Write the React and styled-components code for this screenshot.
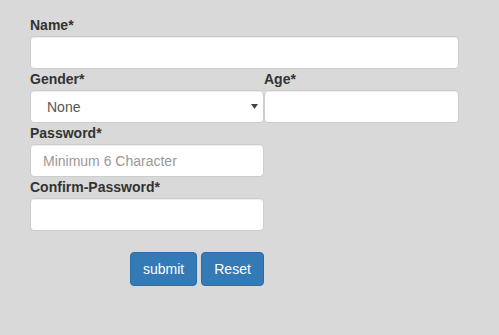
import React, { useState } from 'react';
import styled, { createGlobalStyle } from 'styled-components';

const GlobalStyle = createGlobalStyle`
    html, body {
        margin: 0;
        padding: 0;
        background-color: #d9d9d9;
        font-family: 'Liberation Sans', Arial, sans-serif;
        font-size: 14px;
        color: #333333;
    }
    * {
        box-sizing: border-box;
    }
`

const Page = styled.div`
    min-height: 335px;
    padding: 15px 0 0 30px;
`

const Form = styled.form`
    width: 429px;
    display: grid;
    grid-template-columns: 234px 1fr;
`

const Group = styled.div`
    grid-column: ${props => props.full ? '1 / 3' : 'auto'};
    display: flex;
    flex-direction: column;
    height: 54px;
`

const Label = styled.label`
    display: block;
    font-weight: bold;
    font-size: 14px;
    line-height: 20px;
    height: 21px;
    color: #333333;
`

const Input = styled.input`
    width: 100%;
    height: 33px;
    padding: 6px 12px;
    font-family: 'Liberation Sans', Arial, sans-serif;
    font-size: 14px;
    color: #555555;
    background-color: #ffffff;
    border: 1px solid #cccccc;
    border-radius: 4px;
    box-shadow: inset 0 1px 1px rgba(0, 0, 0, 0.075);
    outline: none;

    &::placeholder {
        color: #999999;
    }
`

const SelectWrap = styled.div`
    position: relative;
    width: 100%;
`

const Select = styled.select`
    width: 100%;
    height: 33px;
    padding: 6px 16px;
    font-family: 'Liberation Sans', Arial, sans-serif;
    font-size: 14px;
    color: #555555;
    background-color: #ffffff;
    border: 1px solid #cccccc;
    border-radius: 4px;
    box-shadow: inset 0 1px 1px rgba(0, 0, 0, 0.075);
    appearance: none;
    outline: none;
`

const Arrow = styled.svg`
    position: absolute;
    right: 6px;
    top: 14px;
    pointer-events: none;
`

const Buttons = styled.div`
    grid-column: 1 / 3;
    display: flex;
    gap: 4px;
    padding: 21px 0 0 100px;
`

const Button = styled.button`
    height: 34px;
    padding: 0 12px;
    font-family: 'Liberation Sans', Arial, sans-serif;
    font-size: 14px;
    color: #ffffff;
    background-color: #337ab7;
    border: 1px solid #2e6da4;
    border-radius: 4px;
    cursor: pointer;

    &:hover {
        background-color: #286090;
    }
`

export default function App() {
    const [gender, setGender] = useState('none')

    return (
        <Page>
            <GlobalStyle />
            <Form onSubmit={e => e.preventDefault()}>
                <Group full>
                    <Label>Name*</Label>
                    <Input type='text' />
                </Group>

                <Group>
                    <Label>Gender*</Label>
                    <SelectWrap>
                        <Select value={gender} onChange={e => setGender(e.target.value)}>
                            <option value='none'>None</option>
                            <option value='male'>Male</option>
                            <option value='female'>Female</option>
                        </Select>
                        <Arrow width='7' height='5' viewBox='0 0 7 5'>
                            <path d='M0 0 L7 0 L3.5 5 Z' fill='#444444' />
                        </Arrow>
                    </SelectWrap>
                </Group>
                <Group>
                    <Label>Age*</Label>
                    <Input type='text' />
                </Group>

                <Group>
                    <Label>Password*</Label>
                    <Input type='password' placeholder='Minimum 6 Character' />
                </Group>
                <div />

                <Group>
                    <Label>Confirm-Password*</Label>
                    <Input type='password' />
                </Group>
                <div />

                <Buttons>
                    <Button type='submit'>submit</Button>
                    <Button type='reset'>Reset</Button>
                </Buttons>
            </Form>
        </Page>
    )
}
